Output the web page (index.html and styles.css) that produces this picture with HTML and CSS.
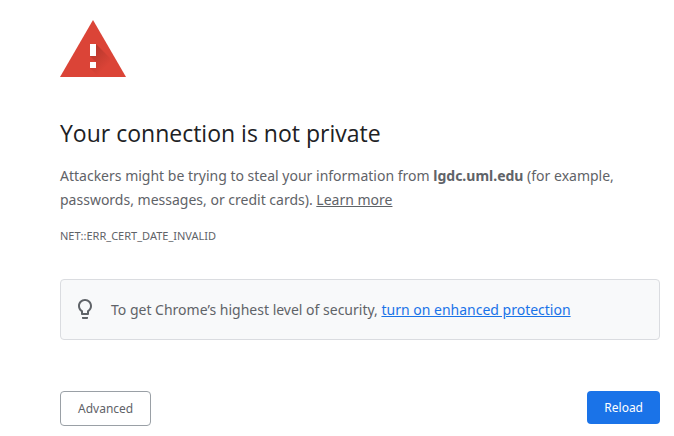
FILE: index.html
```
<!DOCTYPE html>
<html lang="en">
<head>
    <meta charset="UTF-8">
    <meta name="viewport" content="width=device-width, initial-scale=1.0">
    <title>Privacy error</title>
    <link rel="stylesheet" href="styles.css">
</head>
<body>
    <main class="interstitial">
        <svg class="warning-icon" viewBox="0 0 66 57" aria-hidden="true">
            <defs>
                <linearGradient id="shade" gradientUnits="userSpaceOnUse" x1="33" y1="30" x2="48" y2="45">
                    <stop offset="0" stop-color="#b0352a" stop-opacity="0.8"/>
                    <stop offset="1" stop-color="#b0352a" stop-opacity="0"/>
                </linearGradient>
            </defs>
            <path fill="#db4437" d="M33 0 66 57H0z"/>
            <path fill="url(#shade)" d="M36 24 50 38V57H39L30 48V42H36L30 36z"/>
            <path fill="#fff" d="M30 24h6v12h-6zM30 42h6v6h-6z"/>
        </svg>

        <h1>Your connection is not private</h1>
        <p class="message">Attackers might be trying to steal your information from <strong>lgdc.uml.edu</strong> (for example, passwords, messages, or credit cards). <a class="learn-more" href="#">Learn more</a></p>
        <div class="error-code">NET::ERR_CERT_DATE_INVALID</div>

        <div class="protection">
            <svg class="bulb" viewBox="0 0 24 24" aria-hidden="true">
                <path fill="#5f6368" d="M9 19.700v.3c0 .5.4 1 1 1h4c.6 0 1-.5 1-1v-.9H9zM12 1C8.100 1 5 4.100 5 8c0 2.400 1.200 4.500 3 5.700V16c0 .5.4 1 1 1h6c.6 0 1-.5 1-1v-2.300c1.800-1.300 3-3.400 3-5.700 0-3.900-3.100-7-7-7zm2.900 11.100l-.9.600V15h-4v-2.300l-.9-.6C7.800 11.200 7 9.600 7 8c0-2.800 2.200-5 5-5s5 2.200 5 5c0 1.600-.8 3.200-2.100 4.100z"/>
            </svg>
            <div>To get Chrome’s highest level of security, <a class="enhanced" href="#">turn on enhanced protection</a></div>
        </div>

        <div class="buttons">
            <button class="button secondary" type="button">Advanced</button>
            <button class="button primary" type="button">Reload</button>
        </div>
    </main>
</body>
</html>
```
FILE: styles.css
```
* {
    margin: 0;
    padding: 0;
    box-sizing: border-box;
}
body {
    background: #fff;
    color: #5f6368;
    font-family: "Segoe UI", "Noto Sans", sans-serif;
    font-size: 14px;
    line-height: 24px;
}
.interstitial {
    max-width: 674px;
    padding: 20px 14px 10px 60px;
}
.warning-icon {
    display: block;
    width: 66px;
    height: 57px;
    margin-bottom: 40px;
}
h1 {
    color: #202124;
    font-family: "Segoe UI", "Open Sans", sans-serif;
    font-size: 23px;
    font-weight: 400;
    line-height: 32px;
    margin-bottom: 15px;
}
.error-code {
    font-size: 11px;
    margin-top: 12px;
}
.learn-more {
    color: #5f6368;
}
.protection {
    display: flex;
    align-items: center;
    gap: 14px;
    margin-top: 31px;
    padding: 18px 12px 17px;
    background: #f8f9fa;
    border: 1px solid #dadce0;
    border-radius: 4px;
}
.bulb {
    flex: none;
    width: 24px;
    height: 24px;
}
.enhanced {
    color: #1a73e8;
}
.buttons {
    display: flex;
    align-items: flex-start;
    justify-content: space-between;
    margin-top: 51px;
}
.button {
    padding: 8px 17px;
    border: 0;
    border-radius: 4px;
    font-family: inherit;
    font-size: 12px;
    line-height: 17px;
    cursor: pointer;
}
.primary {
    background: #1a73e8;
    color: #fff;
}
.secondary {
    background: #fff;
    border: 1px solid #9aa0a6;
    color: #5f6368;
}
```
